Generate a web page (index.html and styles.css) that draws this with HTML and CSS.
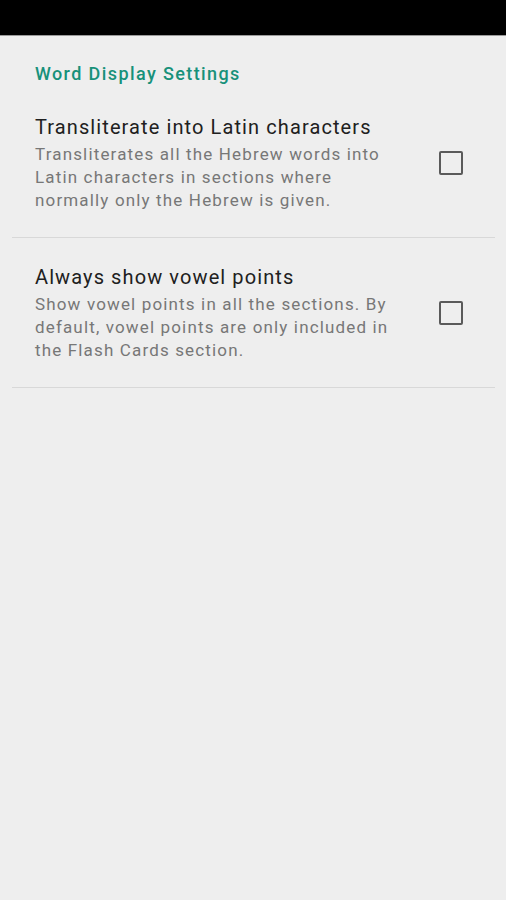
FILE: index.html
```html
<!DOCTYPE html>
<html lang="en">
  <head>
    <meta charset="UTF-8" />
    <meta name="viewport" content="width=device-width, initial-scale=1.0" />
    <title>Settings</title>
    <link rel="stylesheet" href="styles.css">
  </head>
  <body>
    <div class="status-bar"></div>

    <main class="settings">
      <h2 class="category">Word Display Settings</h2>

      <div class="pref">
        <div class="pref-text">
          <div class="pref-title">Transliterate into Latin characters</div>
          <div class="pref-summary">
            Transliterates all the Hebrew words into Latin characters in
            sections where normally only the Hebrew is given.
          </div>
        </div>
        <span class="checkbox"></span>
      </div>

      <div class="pref">
        <div class="pref-text">
          <div class="pref-title">Always show vowel points</div>
          <div class="pref-summary">
            Show vowel points in all the sections. By default, vowel points
            are only included in the Flash Cards section.
          </div>
        </div>
        <span class="checkbox"></span>
      </div>
    </main>
  </body>
</html>
```

FILE: styles.css
```css
body {
  margin: 0;
  padding: 0;
  background-color: #eeeeee;
  font-family: Roboto, "Noto Sans", sans-serif;
  min-height: 900px;
}

.status-bar {
  height: 35px;
  background-color: #000;
  border-bottom: 1px solid #9a9a9a;
}

.settings {
  padding: 0 11px 0 12px;
}

.category {
  margin: 0;
  padding: 26px 0 0 23px;
  font-size: 18px;
  line-height: 24px;
  font-weight: 500;
  letter-spacing: 1.4px;
  color: #17917a;
}

.pref {
  display: flex;
  align-items: center;
  padding: 26px 0 25px 23px;
  border-bottom: 1px solid #d8d8d8;
}

.category + .pref {
  padding-top: 28px;
}

.pref-text {
  flex: 1;
  max-width: 372px;
}

.pref-title {
  font-size: 20px;
  line-height: 26px;
  letter-spacing: 1.1px;
  color: #202020;
  margin-bottom: 3px;
}

.pref-summary {
  font-size: 17px;
  line-height: 23px;
  letter-spacing: 1.15px;
  color: #777;
}

.checkbox {
  width: 20px;
  height: 20px;
  border: 2px solid #5a5a5a;
  border-radius: 2px;
  margin: 0 32px 0 auto;
  flex-shrink: 0;
}
```
